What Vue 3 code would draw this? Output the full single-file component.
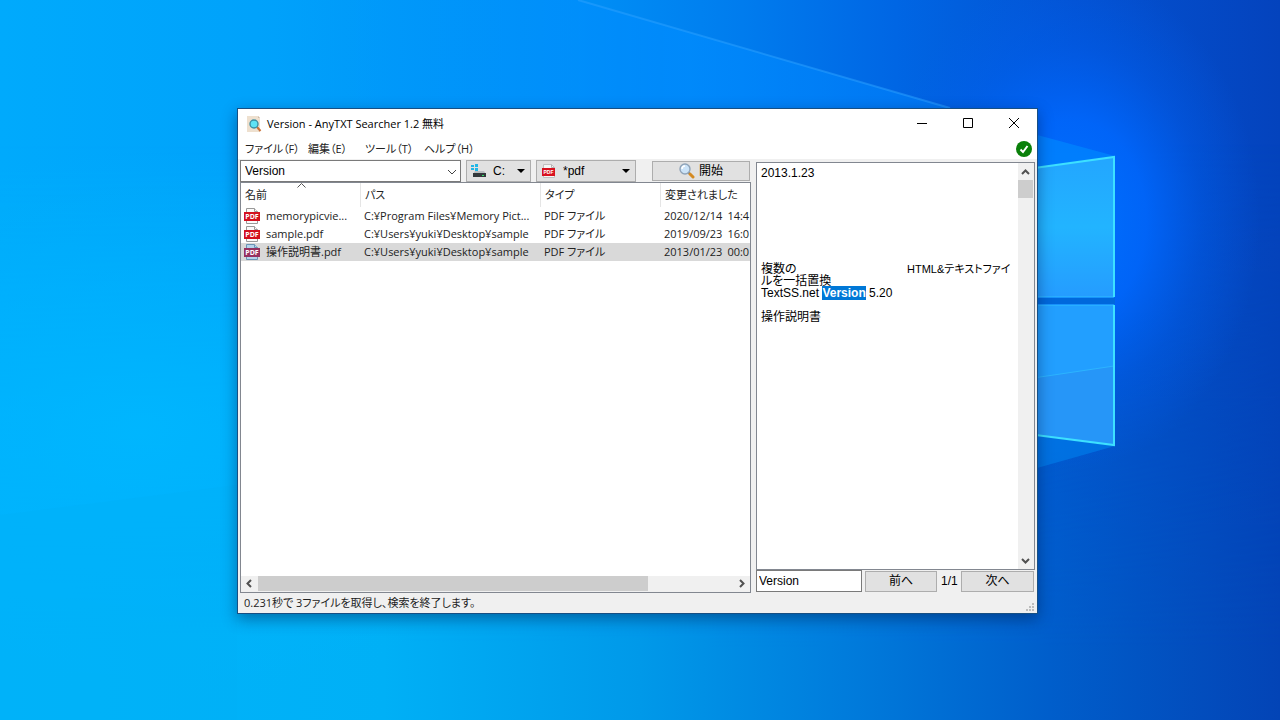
<script setup>
import { ref } from 'vue'

const menus = ['ファイル（F）', '編集（E）', 'ツール（T）', 'ヘルプ（H）']
const columns = ['名前', 'パス', 'タイプ', '変更されました']
const files = [
  { name: 'memorypicvie...', path: 'C:¥Program Files¥Memory Pict...', type: 'PDF ファイル', date: '2020/12/14', time: '14:4' },
  { name: 'sample.pdf', path: 'C:¥Users¥yuki¥Desktop¥sample', type: 'PDF ファイル', date: '2019/09/23', time: '16:0' },
  { name: '操作説明書.pdf', path: 'C:¥Users¥yuki¥Desktop¥sample', type: 'PDF ファイル', date: '2013/01/23', time: '00:0' }
]
const selected = ref(2)
const query = ref('Version')
const find = ref('Version')
</script>

<template>
  <main class="desktop">
    <svg class="wallpaper" viewBox="0 0 1280 720" preserveAspectRatio="none" aria-hidden="true">
      <defs>
        <linearGradient id="base" x1="0" y1="0" x2="1" y2="0">
          <stop offset="0" stop-color="#00aafc" />
          <stop offset=".2" stop-color="#00a2fb" />
          <stop offset=".45" stop-color="#0090f6" />
          <stop offset=".58" stop-color="#007cee" />
          <stop offset=".7" stop-color="#0066e4" />
          <stop offset=".84" stop-color="#0352d2" />
          <stop offset="1" stop-color="#0443bd" />
        </linearGradient>
        <linearGradient id="low" x1="0" y1="0" x2="1" y2="0">
          <stop offset="0" stop-color="#00b4fb" />
          <stop offset=".3" stop-color="#00b0f6" />
          <stop offset=".5" stop-color="#0099e9" />
          <stop offset=".66" stop-color="#007cdc" />
          <stop offset=".82" stop-color="#005ecb" />
          <stop offset="1" stop-color="#0344b6" />
        </linearGradient>
        <linearGradient id="fade" x1="0" y1="0" x2="0" y2="1">
          <stop offset=".2" stop-color="#000" />
          <stop offset=".9" stop-color="#fff" />
        </linearGradient>
        <mask id="lowmask"><rect width="1280" height="720" fill="url(#fade)" /></mask>
        <radialGradient id="glow">
          <stop offset="0" stop-color="#0072ff" />
          <stop offset=".4" stop-color="#0068ff" stop-opacity=".85" />
          <stop offset=".7" stop-color="#0062f6" stop-opacity=".35" />
          <stop offset="1" stop-color="#0060f0" stop-opacity="0" />
        </radialGradient>
        <radialGradient id="left">
          <stop offset="0" stop-color="#00b8ff" stop-opacity=".8" />
          <stop offset="1" stop-color="#00b4ff" stop-opacity="0" />
        </radialGradient>
        <linearGradient id="beam" x1="0" y1="0" x2="1" y2="0">
          <stop offset="0" stop-color="#0090ff" stop-opacity="0" />
          <stop offset=".6" stop-color="#008cff" stop-opacity=".7" />
          <stop offset="1" stop-color="#007cf8" stop-opacity=".7" />
        </linearGradient>
        <linearGradient id="pane" x1="0" y1="0" x2="0" y2="1">
          <stop offset="0" stop-color="#23a6ff" />
          <stop offset=".5" stop-color="#22b4ff" />
          <stop offset="1" stop-color="#259cff" />
        </linearGradient>
      </defs>
      <rect width="1280" height="720" fill="url(#base)" />
      <rect width="1280" height="720" fill="url(#low)" mask="url(#lowmask)" />
      <ellipse cx="140" cy="430" rx="420" ry="280" fill="url(#left)" />
      <ellipse cx="1070" cy="220" rx="190" ry="250" fill="url(#glow)" />
      <path d="M578 0 950 108H300V0Z" fill="url(#beam)" />
      <path d="M578 0 950 108" stroke="#2ea2ff" stroke-width="2" opacity=".5" />
      <path d="M0 515 237 485V720H0Z" fill="#00b0f6" opacity=".3" />
      <path d="M1030 133 1115 156 1030 168Z" fill="#008cff" opacity=".6" />
      <path d="M1030 435 1115 446 1030 470Z" fill="#0080ec" opacity=".6" />
      <path d="M1030 298H1115V304H1030Z" fill="#0068dc" />
      <path d="M1020 170 1114 157V297H1020Z" fill="url(#pane)" />
      <path d="M1020 305H1114V445L1020 433Z" fill="#229fff" />
      <path d="M1020 380 1114 366V445L1020 433Z" fill="#2696f8" />
      <path d="M1020 380 1114 366" stroke="#2cb4ff" />
      <path d="M1020 297H1114M1020 305H1114" stroke="#2fbfff" />
      <path d="M1020 170 1114 157V297M1114 305V445L1020 433" fill="none" stroke="#3de0ff" stroke-width="2" />
    </svg>

    <section class="window" aria-label="AnyTXT Searcher">
      <header class="titlebar">
        <svg class="appicon" width="16" height="16" viewBox="0 0 16 16" aria-hidden="true">
          <path d="M1 0H12L14 2V16H1Z" fill="#eee0cf" />
          <path d="M12 0V2H14Z" fill="#cdbba8" />
          <path d="m11 11 3.500 4" stroke="#c9733c" stroke-width="2" />
          <circle cx="8" cy="8" r="4" fill="#5fe3f5" stroke="#3e8fa3" stroke-width="1.400" />
        </svg>
        <h1>Version - AnyTXT Searcher 1.2 無料</h1>
        <div class="caption">
          <button type="button" aria-label="最小化"><svg width="12" height="12" viewBox="0 0 12 12"><path d="M1 5.500H11" /></svg></button>
          <button type="button" aria-label="最大化"><svg width="12" height="12" viewBox="0 0 12 12"><path d="M1.500.5H10.500V9.500H1.500Z" /></svg></button>
          <button type="button" aria-label="閉じる"><svg width="12" height="12" viewBox="0 0 12 12"><path d="m1 0 10 10M11 0 1 10" /></svg></button>
        </div>
      </header>

      <nav class="menubar">
        <button v-for="m in menus" :key="m" type="button">{{ m }}</button>
        <svg class="ok" width="16" height="16" viewBox="0 0 16 16" role="img" aria-label="OK">
          <circle cx="8" cy="8" r="8" fill="#0a800a" />
          <path d="m4.500 8.500 2.500 2.500L11.500 5" fill="none" stroke="#fff" stroke-width="2" />
        </svg>
      </nav>

      <div class="body">
        <div class="left">
          <div class="toolbar">
            <div class="combo">
              <input v-model="query" type="text" aria-label="検索語">
              <button type="button" aria-label="履歴"><svg width="10" height="6" viewBox="0 0 10 6"><path d="m1 1 4 4 4-4" fill="none" stroke="#444" /></svg></button>
            </div>
            <div class="pick drive">
              <svg class="lead" width="16" height="16" viewBox="0 0 16 16" aria-hidden="true">
                <path d="M0 2H3V4H0ZM4 1H7V4H4ZM0 5H3V7H0ZM4 5H7V8H4Z" fill="#20b6e6" />
                <path d="M4 8H13L15 11H2Z" fill="#b9bdc0" />
                <path d="M2 10H15V14H2Z" fill="#33383b" />
                <path d="M11 12H13V13H11Z" fill="#35e06a" />
              </svg>
              <select aria-label="ドライブ"><option>C:</option></select>
              <svg class="drop" width="8" height="4" viewBox="0 0 8 4" aria-hidden="true"><path d="M0 0H8L4 4Z" /></svg>
            </div>
            <div class="pick kind">
              <svg class="lead" width="16" height="16" viewBox="0 0 16 16" aria-hidden="true">
                <path d="M2.500 1.500H10.500L13.500 4.500V14.500H2.500Z" fill="#f6f6f6" stroke="#c0c0c0" />
                <path d="M10.500 1.500V4.500H13.500" fill="none" stroke="#b4b4b4" />
                <path d="M1 5H14V13H1Z" fill="#d8121f" />
                <text x="7.500" y="11" text-anchor="middle" class="tag">PDF</text>
              </svg>
              <select aria-label="種類"><option>*pdf</option></select>
              <svg class="drop" width="8" height="4" viewBox="0 0 8 4" aria-hidden="true"><path d="M0 0H8L4 4Z" /></svg>
            </div>
            <button class="push start" type="button">
              <svg width="16" height="16" viewBox="0 0 16 16" aria-hidden="true">
                <path d="m9 9 2 2" stroke="#777" stroke-width="2" />
                <path d="m11 11 3 3" stroke="#d48a22" stroke-width="3" stroke-linecap="round" />
                <circle cx="6" cy="6" r="5" fill="#cbe3f8" stroke="#8fa3b8" stroke-width="1.400" />
                <path d="M3 6a3 3 0 0 1 3-3" fill="none" stroke="#fff" stroke-width="1.500" />
              </svg>
              開始
            </button>
          </div>

          <div class="list">
            <div class="rows">
              <table>
                <colgroup><col class="cname"><col class="cpath"><col class="ctype"><col></colgroup>
                <thead>
                  <tr>
                    <th v-for="(c, i) in columns" :key="c" scope="col">
                      {{ c }}
                      <svg v-if="i === 0" class="sort" width="9" height="5" viewBox="0 0 9 5" aria-hidden="true"><path d="M.5 4.500 4.500.5l4 4" fill="none" stroke="#555" /></svg>
                    </th>
                  </tr>
                </thead>
                <tbody>
                  <tr v-for="(f, i) in files" :key="f.name" :class="{ on: i === selected }" @click="selected = i">
                    <td>
                      <div class="file">
                        <svg width="16" height="16" viewBox="0 0 16 16" aria-hidden="true">
                          <path class="sheet" d="M2.500.5H10.500L13.500 3.500V15.500H2.500Z" />
                          <path class="sheet" d="M10.500.5V3.500H13.500" />
                          <path class="band" d="M0 4H16V13H0Z" />
                          <text x="8" y="11" text-anchor="middle" class="tag big">PDF</text>
                        </svg>
                        <span>{{ f.name }}</span>
                      </div>
                    </td>
                    <td>{{ f.path }}</td>
                    <td>{{ f.type }}</td>
                    <td class="when"><span>{{ f.date }}</span><span>{{ f.time }}</span></td>
                  </tr>
                </tbody>
              </table>
            </div>
            <div class="hbar">
              <svg width="17" height="15" viewBox="0 0 17 15" aria-hidden="true"><path d="m10 4-3.500 3.500L10 11" /></svg>
              <div class="track"><div class="thumb"></div></div>
              <svg width="17" height="15" viewBox="0 0 17 15" aria-hidden="true"><path d="m7 4 3.500 3.500L7 11" /></svg>
            </div>
          </div>
        </div>

        <div class="right">
          <div class="preview">
            <div class="doc">
              <p>2013.1.23</p>
              <p class="heading"><span>複数の</span><span class="wide">HTML&amp;テキストファイ</span></p>
              <p>ルを一括置換</p>
              <p>TextSS.net <mark>Version</mark> 5.20</p>
              <p class="manual">操作説明書</p>
            </div>
            <div class="vbar">
              <svg width="15" height="17" viewBox="0 0 15 17" aria-hidden="true"><path d="m4 11 3.500-3.500L11 11" /></svg>
              <div class="vthumb"></div>
              <svg class="down" width="15" height="17" viewBox="0 0 15 17" aria-hidden="true"><path d="m4 7 3.500 3.500L11 7" /></svg>
            </div>
          </div>
          <div class="finder">
            <input v-model="find" type="text" aria-label="文書内検索">
            <button class="push" type="button">前へ</button>
            <span>1/1</span>
            <button class="push" type="button">次へ</button>
          </div>
        </div>
      </div>

      <footer class="status">
        <span>0.231秒で 3ファイルを取得し、検索を終了します。</span>
        <svg width="9" height="9" viewBox="0 0 9 9" aria-hidden="true"><path d="M6 0H8V2H6ZM3 3H5V5H3ZM6 3H8V5H6ZM0 6H2V8H0ZM3 6H5V8H3ZM6 6H8V8H6Z" fill="#bdbdbd" /></svg>
      </footer>
    </section>
  </main>
</template>

<style>
body {
  overflow: hidden;
}
</style>

<style scoped>
* {
  box-sizing: border-box;
}
.desktop {
  position: relative;
  height: 100vh;
  overflow: hidden;
  background: #0090f8;
  color: #000;
  font: 11px/16px "Open Sans", "Noto Sans CJK JP", sans-serif;
  font-feature-settings: "palt";
}
.wallpaper {
  position: absolute;
  inset: 0;
  width: 100%;
  height: 100%;
}
.window {
  position: absolute;
  inset: 108px 242px 106px 237px;
  display: flex;
  flex-direction: column;
  border: 1px solid #174f83;
  background: #f0f0f0;
  box-shadow: 0 5px 14px rgba(0, 20, 60, .42);
}
button,
input,
select {
  margin: 0;
  padding: 0;
  border: 0;
  border-radius: 0;
  background: none;
  color: inherit;
  font: inherit;
  font-feature-settings: inherit;
}
.titlebar {
  display: flex;
  align-items: center;
  height: 30px;
  padding-left: 8px;
  background: #fff;
}
h1 {
  flex: 1;
  margin: 0 0 0 5px;
  font-size: 11px;
  font-weight: 400;
  white-space: nowrap;
}
.caption {
  display: flex;
}
.caption button {
  display: grid;
  place-items: center;
  width: 46px;
  height: 28px;
}
.caption path {
  fill: none;
  stroke: #000;
}
.menubar {
  display: grid;
  grid-template-columns: 63px 57px 59px 1fr auto;
  align-items: center;
  height: 20px;
  padding: 0 5px 0 7px;
  background: #fff;
}
.menubar button {
  color: #222;
  text-align: left;
  white-space: nowrap;
}
.body {
  flex: 1;
  display: flex;
  gap: 5px;
  min-height: 0;
  padding: 1px 2px 0;
}
.left {
  flex: 511;
  display: flex;
  flex-direction: column;
  min-width: 0;
}
.right {
  flex: 279;
  display: flex;
  flex-direction: column;
  min-width: 0;
  padding: 2px 0 1px;
}
.toolbar,
.preview,
.finder {
  font-family: "Liberation Sans", "Noto Sans CJK JP", sans-serif;
  font-size: 12px;
}
.toolbar {
  display: flex;
  align-items: center;
  gap: 5px;
  height: 22px;
}
.combo {
  flex: 1;
  display: flex;
  height: 22px;
  border: 1px solid #7a7a7a;
  background: #fff;
}
.combo input {
  flex: 1;
  min-width: 0;
  padding-left: 4px;
}
.combo button {
  width: 17px;
}
.pick {
  position: relative;
  height: 22px;
}
.pick select {
  width: 100%;
  height: 100%;
  padding-left: 26px;
  border: 1px solid #adadad;
  background: #e1e1e1;
  appearance: none;
}
.drive {
  width: 65px;
}
.kind {
  width: 100px;
}
.lead {
  position: absolute;
  left: 5px;
  top: 3px;
}
.drop {
  position: absolute;
  right: 6px;
  top: 9px;
}
.tag {
  fill: #fff;
  font: bold 5px "Liberation Sans", sans-serif;
}
.tag.big {
  font: bold 7px "Open Sans", sans-serif;
}
.push {
  border: 1px solid #adadad;
  background: #e1e1e1;
}
.start {
  display: flex;
  align-items: center;
  justify-content: center;
  gap: 4px;
  width: 98px;
  height: 20px;
  margin: 0 1px 0 11px;
}
.list {
  flex: 1;
  display: flex;
  flex-direction: column;
  min-height: 0;
  border: 1px solid #828790;
  background: #fff;
  color: #222;
}
.rows {
  flex: 1;
  overflow: hidden;
}
table {
  width: 100%;
  border-collapse: separate;
  border-spacing: 0;
  table-layout: fixed;
}
.cname {
  width: 120px;
}
.cpath {
  width: 180px;
}
.ctype {
  width: 120px;
}
th {
  position: relative;
  height: 24px;
  padding: 0 0 0 4px;
  border-right: 1px solid #e5e5e5;
  font-weight: 400;
  text-align: left;
  white-space: nowrap;
}
th:last-child {
  border-right: 0;
}
.sort {
  position: absolute;
  top: 0;
  left: 56px;
}
td {
  height: 18px;
  padding: 0 0 0 3px;
  line-height: 18px;
  white-space: nowrap;
}
.file {
  display: flex;
  align-items: center;
  gap: 6px;
}
.file svg {
  flex: none;
}
.sheet {
  fill: #fafafa;
  stroke: #999;
}
.band {
  fill: #d3101f;
}
.on {
  background: #d9d9d9;
}
.on .sheet {
  fill: #b5d4ec;
  stroke: #6b93b5;
}
.on .band {
  fill: #96305f;
}
.when span + span {
  margin-left: 5px;
}
.hbar {
  display: flex;
  height: 16px;
  background: #f0f0f0;
}
.hbar path,
.vbar path {
  fill: none;
  stroke: #505050;
  stroke-width: 2;
}
.track {
  flex: 1;
}
.thumb {
  width: 82%;
  height: 15px;
  background: #cdcdcd;
}
.preview {
  flex: 1;
  display: flex;
  min-height: 0;
  border: 1px solid #828790;
  background: #fff;
}
.doc {
  flex: 1;
  padding: 4px;
  line-height: 12px;
}
.doc p {
  margin: 0;
  white-space: nowrap;
}
.doc .heading {
  display: flex;
  margin-top: 84px;
}
.heading span {
  flex: 146;
}
.heading .wide {
  flex: 107;
  font-size: 11px;
}
.doc .manual {
  margin-top: 12px;
}
mark {
  background: #0078d7;
  color: #fff;
  font-weight: 700;
}
.vbar {
  display: flex;
  flex-direction: column;
  width: 16px;
  background: #f0f0f0;
}
.vthumb {
  width: 15px;
  height: 18px;
  background: #cdcdcd;
}
.down {
  margin-top: auto;
}
.finder {
  display: flex;
  align-items: center;
  gap: 3px;
  height: 22px;
  padding-right: 1px;
}
.finder input {
  flex: 105;
  min-width: 0;
  height: 22px;
  padding-left: 2px;
  border: 1px solid #7a7a7a;
  background: #fff;
}
.finder button {
  flex: 73;
  height: 21px;
}
.finder span {
  width: 18px;
  text-align: center;
}
.status {
  display: flex;
  align-items: center;
  justify-content: space-between;
  height: 20px;
  padding: 0 2px 0 6px;
  color: #222;
}
.status svg {
  align-self: flex-end;
  margin-bottom: 1px;
}
</style>
